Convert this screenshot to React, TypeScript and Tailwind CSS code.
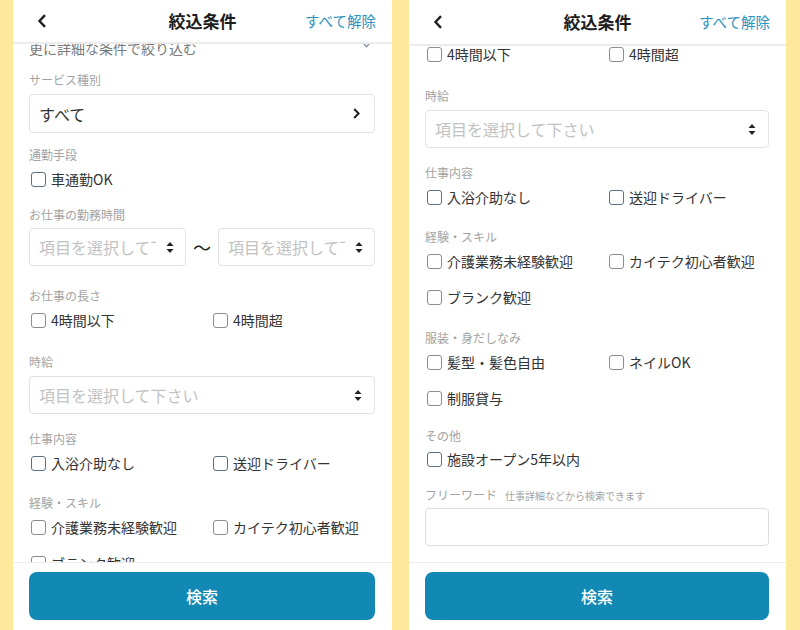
import React from "react";

const UpDown = () => (
  <svg width="8" height="11" viewBox="0 0 8 11" className="shrink-0">
    <path d="M4 0 L7.5 4 H0.5 Z" fill="#222" />
    <path d="M0.5 7 H7.5 L4 11 Z" fill="#222" />
  </svg>
);

const Label = ({ children, className = "" }: { children: React.ReactNode; className?: string }) => (
  <div className={"h-[18px] text-[12px] leading-[18px] text-[#a3a3a3] " + className}>{children}</div>
);

const Check = ({ text, dark }: { text: string; dark?: boolean }) => (
  <div className="flex items-center">
    <span
      className={
        "ml-[2px] h-[15px] w-[15px] shrink-0 rounded-[3px] border-[1.5px] bg-white " +
        (dark ? "border-[#5d7082]" : "border-[#8c8c8c]")
      }
    />
    <span className="ml-[5px] whitespace-nowrap text-[14px] leading-[24px] text-[#333]">{text}</span>
  </div>
);

const Row = ({ children, className = "" }: { children: React.ReactNode; className?: string }) => (
  <div className={"grid h-[24px] grid-cols-[182px_1fr] items-center " + className}>{children}</div>
);

const Placeholder = ({ className = "" }: { className?: string }) => (
  <div
    className={
      "flex h-[38px] items-center justify-between rounded-[4px] border border-[#dfe2e7] bg-white pl-[9px] pr-[12px] " +
      className
    }
  >
    <span className="overflow-hidden whitespace-nowrap text-[16px] text-[#c2c2c2]">項目を選択して下さい</span>
    <UpDown />
  </div>
);

const Content = () => (
  <div className="flex flex-col">
    <div className="flex h-[22px] items-start justify-between">
      <span className="text-[14px] leading-[22px] text-[#7a7a7a]">更に詳細な条件で絞り込む</span>
      <svg width="7" height="5" viewBox="0 0 7 5" className="mr-[5px] mt-[6px]">
        <path d="M0.8 0.8 L3.5 3.8 L6.2 0.8" fill="none" stroke="#8494a4" strokeWidth="1.4" />
      </svg>
    </div>

    <Label className="mt-[12px]">サービス種別</Label>
    <div className="mt-[5px] flex h-[39px] items-center justify-between rounded-[4px] border border-[#e1e4e8] pl-[9px] pr-[14px]">
      <span className="text-[16px] text-[#333]">すべて</span>
      <svg width="7" height="11" viewBox="0 0 7 11">
        <path d="M1.2 1 L5.6 5.5 L1.2 10" fill="none" stroke="#222" strokeWidth="2" />
      </svg>
    </div>

    <Label className="mt-[13px]">通勤手段</Label>
    <Row className="mt-[3px]">
      <Check text="車通勤OK" dark />
    </Row>

    <Label className="mt-[15px]">お仕事の勤務時間</Label>
    <div className="mt-[4px] flex items-center">
      <div className="flex h-[38px] w-[157px] items-center justify-between rounded-[4px] border border-[#dfe2e7] pl-[9px] pr-[11px]">
        <span className="w-[117px] overflow-hidden whitespace-nowrap text-[16px] text-[#c2c2c2]">項目を選択して下さい</span>
        <UpDown />
      </div>
      <span className="flex-1 text-center text-[18px] text-[#222]">〜</span>
      <div className="flex h-[38px] w-[157px] items-center justify-between rounded-[4px] border border-[#dfe2e7] pl-[9px] pr-[11px]">
        <span className="w-[117px] overflow-hidden whitespace-nowrap text-[16px] text-[#c2c2c2]">項目を選択して下さい</span>
        <UpDown />
      </div>
    </div>

    <Label className="mt-[21px]">お仕事の長さ</Label>
    <Row className="mt-[3px]">
      <Check text="4時間以下" />
      <Check text="4時間超" />
    </Row>

    <Label className="mt-[21px]">時給</Label>
    <Placeholder className="mt-[5px]" />

    <Label className="mt-[16px]">仕事内容</Label>
    <Row className="mt-[3px]">
      <Check text="入浴介助なし" dark />
      <Check text="送迎ドライバー" dark />
    </Row>

    <Label className="mt-[19px]">経験・スキル</Label>
    <Row className="mt-[3px]">
      <Check text="介護業務未経験歓迎" />
      <Check text="カイテク初心者歓迎" />
    </Row>
    <Row className="mt-[12px]">
      <Check text="ブランク歓迎" />
    </Row>

    <Label className="mt-[20px]">服装・身だしなみ</Label>
    <Row className="mt-[3px]">
      <Check text="髪型・髪色自由" />
      <Check text="ネイルOK" />
    </Row>
    <Row className="mt-[12px]">
      <Check text="制服貸与" />
    </Row>

    <Label className="mt-[17px]">その他</Label>
    <Row className="mt-[2px]">
      <Check text="施設オープン5年以内" dark />
    </Row>

    <div className="mt-[15px] flex h-[18px] items-center gap-[8px]">
      <span className="text-[12px] text-[#a3a3a3]">フリーワード</span>
      <span className="text-[10px] text-[#a3a3a3]">仕事詳細などから検索できます</span>
    </div>
    <div className="mt-[4px] h-[38px] rounded-[4px] border border-[#dbdfe5] bg-white" />
    <div className="h-[16px]" />
  </div>
);

const Panel = ({ right }: { right?: boolean }) => (
  <div className={"flex h-[630px] flex-col overflow-hidden bg-white " + (right ? "w-[377px]" : "w-[379px]")}>
    <div
      className={
        "grid shrink-0 grid-cols-[1fr_auto_1fr] items-center border-b-2 border-[#ececec] " +
        (right ? "h-[46px]" : "h-[44px]")
      }
    >
      <div className="pl-[24px]">
        <svg width="10" height="14" viewBox="0 0 10 14">
          <path d="M8 1.2 L2.5 7 L8 12.8" fill="none" stroke="#1f1f1f" strokeWidth="2.4" />
        </svg>
      </div>
      <div className="text-[17px] font-bold text-[#1c1c1c]">絞込条件</div>
      <div className="pr-[16px] text-right text-[14.5px] text-[#2b93bf]">すべて解除</div>
    </div>

    <div className="min-h-0 flex-1 overflow-hidden pl-4 pr-[17px]">
      <div className={right ? "mt-[-275px]" : "mt-[-7px]"}>
        <Content />
      </div>
    </div>

    <div className="shrink-0 border-t border-[#ececec] pl-4 pr-[17px] pt-[9px] pb-[10px]">
      <button className="flex h-[48px] w-full items-center justify-center rounded-[8px] bg-[#1189b4] text-[16px] font-medium text-white">
        検索
      </button>
    </div>
  </div>
);

export default function App() {
  return (
    <div className="flex h-[630px] w-[800px] gap-[17px] bg-[#fee89b] pl-[13px] font-['Noto_Sans_CJK_JP','Noto_Sans',sans-serif]">
      <Panel />
      <Panel right />
    </div>
  );
}
